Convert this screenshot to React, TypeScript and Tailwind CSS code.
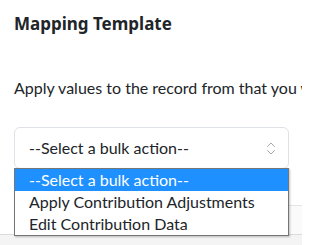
const options = ["--Select a bulk action--", "Apply Contribution Adjustments", "Edit Contribution Data"]

export default function App() {
  return (
    <div className="relative h-[245px] w-[302px] overflow-hidden bg-white font-['Lato',sans-serif] text-[#212529]">
      <div className="flex flex-col px-[14px] pt-[12px]">
        <h2 className="font-['Noto_Sans',sans-serif] text-[17px] font-bold leading-6">Mapping Template</h2>
        <p className="mt-[40px] whitespace-nowrap text-base leading-6">
          Apply values to the record from that you want to apply
        </p>
        <div className="mt-[27px] flex h-[42px] w-[275px] items-center justify-between rounded-md border border-[#dee2e6] pl-[14px] pr-[12px]">
          <span className="text-base">--Select a bulk action--</span>
          <svg width="10" height="15" viewBox="0 0 10 15" fill="none" stroke="#a8a8a8" strokeWidth="1" strokeLinecap="round" strokeLinejoin="round">
            <path d="M1.5 5.5 L5 2 L8.5 5.5" />
            <path d="M1.5 9.5 L5 13 L8.5 9.5" />
          </svg>
        </div>
      </div>

      {/* background bits behind the popup */}
      <div className="absolute left-[289px] right-0 top-[205px] h-[29px] border-t border-[#e5e5e5] bg-[#fafafa]" />
      <div className="absolute inset-x-0 top-[234px] bottom-0 border-t border-[#dcdcdc] bg-[#f4f4f4]" />

      {/* native select popup */}
      <ul className="absolute left-[14px] top-[168px] flex w-[275px] flex-col border border-[#767676] bg-white shadow-[1px_1px_2px_rgba(0,0,0,0.25)]">
        {options.map((o, i) => (
          <li
            key={o}
            className={
              "h-[22px] pl-[14px] text-base leading-[22px] " +
              (i === 0 ? "bg-[#1e90ff] text-white" : "text-[#212529]")
            }
          >
            {o}
          </li>
        ))}
      </ul>
    </div>
  )
}
